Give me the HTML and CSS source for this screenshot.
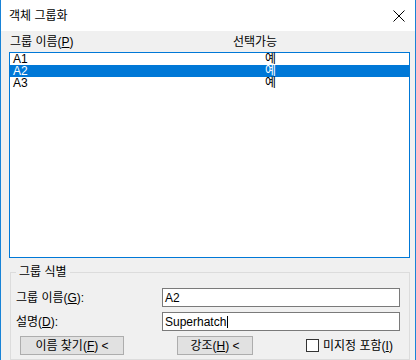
FILE: index.html
```html
<!DOCTYPE html>
<html lang="ko">
<head>
    <meta charset="UTF-8">
    <title>객체 그룹화</title>
    <link rel="stylesheet" href="styles.css">
</head>
<body>
    <div class="window">
        <div class="titlebar">
            <span class="title">객체 그룹화</span>
            <svg class="close" width="12" height="12" viewBox="0 0 12 12">
                <path d="M0.5 0.5 L11.5 11.5 M11.5 0.5 L0.5 11.5" stroke="#000" stroke-width="1" fill="none"/>
            </svg>
        </div>
        <div class="content">
            <div class="list-header">
                <span>그룹 이름(<u>P</u>)</span>
                <span>선택가능</span>
            </div>
            <div class="list">
                <div class="row"><span>A1</span><span>예</span></div>
                <div class="row selected"><span>A2</span><span>예</span></div>
                <div class="row"><span>A3</span><span>예</span></div>
            </div>
            <fieldset class="group">
                <legend>그룹 식별</legend>
                <div class="field">
                    <label>그룹 이름(<u>G</u>):</label>
                    <div class="input">A2</div>
                </div>
                <div class="field">
                    <label>설명(<u>D</u>):</label>
                    <div class="input">Superhatch<span class="caret"></span></div>
                </div>
                <div class="actions">
                    <button class="btn btn-find">이름 찾기(<u>F</u>) &lt;</button>
                    <button class="btn btn-highlight">강조(<u>H</u>) &lt;</button>
                    <label class="check"><span class="box"></span>미지정 포함(<u>I</u>)</label>
                </div>
            </fieldset>
        </div>
    </div>
</body>
</html>
```

FILE: styles.css
```css
:root {
    --accent: #0078D7;
    --face: #F0F0F0;
    --frame: #1883D7;
}

* {
    margin: 0;
    padding: 0;
    box-sizing: border-box;
}

body {
    font-family: "Liberation Sans", "Noto Sans CJK KR", sans-serif;
    font-size: 12px;
    line-height: 12px;
    color: #000;
    background: #fff;
}

u {
    text-decoration: underline;
    text-underline-offset: 1px;
}

.window {
    width: 416px;
    height: 360px;
    border-left: 1px solid var(--frame);
    border-right: 1px solid var(--frame);
    display: flex;
    flex-direction: column;
    overflow: hidden;
}

.titlebar {
    height: 31px;
    background: #fff;
    display: flex;
    align-items: center;
    justify-content: space-between;
    padding: 0 10px 0 8px;
}

.title {
    font-size: 12px;
    margin-top: 1px;
}

.content {
    flex: 1;
    background: var(--face);
    padding: 0 5px 0 8px;
}

/* 목록 */
.list-header {
    height: 21px;
    display: grid;
    grid-template-columns: 223px 1fr;
    align-items: center;
    padding-left: 1px;
}

.list {
    height: 206px;
    background: #fff;
    border: 1px solid var(--accent);
}

.row {
    display: grid;
    grid-template-columns: 252px 1fr;
    height: 12px;
    line-height: 12px;
    padding-left: 3px;
}

.row.selected {
    background: var(--accent);
    color: #fff;
}

/* 그룹 식별 */
.group {
    margin: 7px 0 0 1px;
    width: 400px;
    border: 1px solid #DCDCDC;
    padding: 9px 9px 4px 5px;
}

.group legend {
    padding: 0 3px;
    line-height: 14px;
}

.field {
    display: flex;
    align-items: center;
    height: 19px;
    margin-bottom: 5px;
}

.field label {
    width: 146px;
}

.input {
    flex: 1;
    height: 19px;
    background: #fff;
    border: 1px solid #7A7A7A;
    padding: 3px 2px 0;
    display: flex;
    align-items: flex-start;
}

.caret {
    width: 1px;
    height: 12px;
    margin-left: 1px;
    background: #000;
}

.actions {
    display: flex;
    align-items: center;
    height: 19px;
    padding-left: 4px;
}

.btn {
    height: 19px;
    font: inherit;
    background: #E1E1E1;
    border: 1px solid #ADADAD;
    color: #000;
}

.btn-find {
    width: 104px;
}

.btn-highlight {
    width: 76px;
    margin-left: 53px;
}

.check {
    display: flex;
    align-items: center;
    margin-left: 53px;
}

.check .box {
    width: 13px;
    height: 13px;
    border: 1px solid #333;
    background: #fff;
    margin-right: 4px;
}
```
